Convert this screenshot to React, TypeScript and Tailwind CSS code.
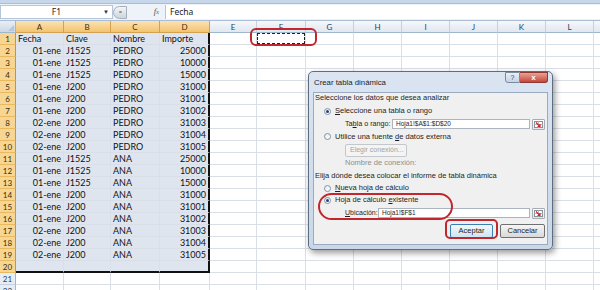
import React from 'react';

const cols = ['A', 'B', 'C', 'D', 'E', 'F', 'G', 'H', 'I', 'J', 'K', 'L', ''];

const rows: string[][] = [
    ['Fecha', 'Clave', 'Nombre', 'Importe'],
    ['01-ene', 'J1525', 'PEDRO', '25000'],
    ['01-ene', 'J1525', 'PEDRO', '10000'],
    ['01-ene', 'J1525', 'PEDRO', '15000'],
    ['01-ene', 'J200', 'PEDRO', '31000'],
    ['01-ene', 'J200', 'PEDRO', '31001'],
    ['01-ene', 'J200', 'PEDRO', '31002'],
    ['02-ene', 'J200', 'PEDRO', '31003'],
    ['02-ene', 'J200', 'PEDRO', '31004'],
    ['02-ene', 'J200', 'PEDRO', '31005'],
    ['01-ene', 'J1525', 'ANA', '25000'],
    ['01-ene', 'J1525', 'ANA', '10000'],
    ['01-ene', 'J1525', 'ANA', '15000'],
    ['01-ene', 'J200', 'ANA', '31000'],
    ['01-ene', 'J200', 'ANA', '31001'],
    ['01-ene', 'J200', 'ANA', '31002'],
    ['02-ene', 'J200', 'ANA', '31003'],
    ['02-ene', 'J200', 'ANA', '31004'],
    ['02-ene', 'J200', 'ANA', '31005'],
    ['', '', '', ''],
    ['', '', '', ''],
    ['', '', '', ''],
];

const Radio: React.FC<{ checked?: boolean }> = ({ checked }) => (
    <span className="w-[7px] h-[7px] rounded-full border border-[#8193a8] bg-gradient-to-br from-[#e6e9ee] to-white flex items-center justify-center shrink-0">
        {checked && <span className="w-[3px] h-[3px] rounded-full bg-[#26456e]" />}
    </span>
);

const RangeButton: React.FC = () => (
    <span className="w-[13px] h-[11px] border border-[#a6acb5] rounded-[1px] bg-gradient-to-b from-white to-[#e3e6ea] flex items-center justify-center shrink-0">
        <svg width="9" height="7" viewBox="0 0 9 7">
            <rect x="0.5" y="0.5" width="8" height="6" fill="#fff" stroke="#8a8f96" />
            <line x1="0.5" y1="3.5" x2="8.5" y2="3.5" stroke="#b8bcc2" />
            <line x1="4.5" y1="0.5" x2="4.5" y2="6.5" stroke="#b8bcc2" />
            <path d="M2 1.5 L6 5.5 M6 3 L6 5.5 L3.5 5.5" stroke="#d0262b" strokeWidth="1.2" fill="none" />
        </svg>
    </span>
);

const FormulaBar: React.FC = () => (
    <>
        <div className="h-[4px] bg-[#c6d7ec] border-b border-[#a9bdd6]" />
        <div className="h-[17px] flex items-center bg-[#eef3f9] border-b border-[#a9bdd6] text-[8.5px] text-[#1a1a1a]">
            <div className="w-[113px] h-[14px] bg-white border border-[#b6c6da] flex items-center relative">
                <span className="flex-1 text-center">F1</span>
                <span className="absolute right-[3px] text-[6px] text-[#333]">▼</span>
            </div>
            <div className="w-[14px] h-[13px] rounded-l-full border border-[#a5b0bd] bg-gradient-to-b from-[#f4f5f7] to-[#cfd5dc] flex items-center justify-center">
                <span className="w-[3px] h-[2px] rounded-full bg-[#8d97a3]" />
            </div>
            <div className="w-[38px] flex justify-end pr-[6px]">
                <span className="italic font-['Liberation_Serif',serif] text-[9px] text-[#555]">f<span className="text-[6px]">x</span></span>
            </div>
            <div className="flex-1 h-[14px] bg-white border-l border-[#b6c6da] flex items-center pl-[4px]">Fecha</div>
        </div>
    </>
);

const Sheet: React.FC = () => (
    <div className="grid grid-cols-[16px_48px_47px_49px_50px_47px_49px_48px_48px_48px_48px_48px_48px_48px] auto-rows-[12px] font-['Lato','Liberation_Sans',sans-serif] text-[9px] leading-[12px] text-[#111]">
        {/* header row */}
        <div className="bg-gradient-to-b from-[#e8eef6] to-[#cdd8e6] border-r border-b border-[#9eb6ce] flex items-end justify-end">
            <span className="w-0 h-0 border-l-[6px] border-l-transparent border-b-[6px] border-b-[#b8c6d6] mr-[1px] mb-[1px]" />
        </div>
        {cols.map((c, i) => (
            <div
                key={i}
                className={`text-center text-[8px] border-r border-b ${i < 4
                    ? 'bg-gradient-to-b from-[#fbe2b3] to-[#f3c46c] border-[#d3a14f] text-[#3a2d10]'
                    : 'bg-gradient-to-b from-[#f6f8fb] to-[#e0e7f0] border-[#c5d1df] border-b-[#9eb6ce] text-[#27415f]'
                    }`}
            >
                {c}
            </div>
        ))}

        {rows.map((r, ri) => {
            const rowNo = ri + 1;
            const inSel = rowNo <= 20;
            return (
                <React.Fragment key={rowNo}>
                    <div
                        className={`text-center text-[8px] border-r border-b ${inSel
                            ? 'bg-[#f7d592] border-[#e8b960] border-r-[#c9943c] text-[#3a2d10]'
                            : 'bg-[#e6edf6] border-[#c5d1df] border-r-[#9eb6ce] text-[#27415f]'
                            }`}
                    >
                        {rowNo}
                    </div>
                    {cols.map((c, ci) => {
                        const sel = inSel && ci < 4;
                        const val = ci < 4 ? r[ci] : '';
                        const right = rowNo > 1 && (ci === 0 || ci === 3);
                        const thickR = inSel && ci === 3;
                        const thickB = rowNo === 20 && ci < 4;
                        const isF1 = rowNo === 1 && c === 'F';
                        return (
                            <div
                                key={ci}
                                className={`relative overflow-hidden whitespace-nowrap px-[2px] ${sel ? 'bg-[#dfe5ef]' : 'bg-white'} ${right ? 'text-right' : 'text-left'} ${thickR ? 'border-r-2 border-r-[#111]' : 'border-r border-r-[#d9dee7]'} ${thickB ? 'border-b-2 border-b-[#111]' : 'border-b border-b-[#d9dee7]'}`}
                            >
                                {isF1 ? (
                                    <div className="absolute inset-0 border-[1.5px] border-dashed border-[#222]" />
                                ) : (
                                    val
                                )}
                            </div>
                        );
                    })}
                </React.Fragment>
            );
        })}
    </div>
);

const Dialog: React.FC = () => (
    <div className="absolute left-[308px] top-[71px] w-[245px] h-[179px] rounded-[5px] border border-[#5d6d82] bg-gradient-to-b from-[#dbe5f2] to-[#c9d7e8] shadow-[2px_3px_6px_rgba(0,0,0,0.4)] px-[4px] pb-[4px] flex flex-col font-['Liberation_Sans',sans-serif] text-[7.5px] text-[#1e1e1e] whitespace-nowrap">
        <div className="h-[20px] flex items-start">
            <span className="mt-[5px] pl-[1px] text-[7.8px]">Crear tabla dinámica</span>
            <div className="ml-auto flex">
                <span className="w-[15px] h-[11px] border border-[#7a8aa0] rounded-bl-[3px] bg-gradient-to-b from-[#e9eff7] to-[#c5d3e4] text-[7px] text-[#34465e] flex items-center justify-center leading-none">?</span>
                <span className="w-[28px] h-[11px] border border-[#8b3a35] border-l-0 rounded-br-[3px] bg-gradient-to-b from-[#e7a196] to-[#c6443a] text-[8px] text-white font-bold flex items-center justify-center leading-none">x</span>
            </div>
        </div>
        <div className="flex-1 bg-[#f0f0f0] border border-[#9aabc1] flex flex-col">
            <div className="h-[10px] flex items-center pl-[1px]">Seleccione los datos que desea analizar</div>
            <div className="h-[16px] flex items-center gap-[4px] pl-[10px]">
                <Radio checked />
                <span><u>S</u>eleccione una tabla o rango</span>
            </div>
            <div className="h-[10px] flex items-center pl-[31px]">
                <span className="w-[47px] text-[7.2px]">Ta<u>b</u>la o rango:</span>
                <span className="w-[138px] h-[10px] bg-white border border-[#acb4bf] flex items-center pl-[3px] text-[6.5px]">Hoja1!$A$1:$D$20</span>
                <span className="ml-[2px]"><RangeButton /></span>
            </div>
            <div className="h-[15px] flex items-center gap-[4px] pl-[10px]">
                <Radio />
                <span>Utilice una fuente <u>d</u>e datos externa</span>
            </div>
            <div className="h-[13px] flex items-center pl-[31px]">
                <span className="w-[62px] h-[13px] border border-[#c4c7cc] rounded-[2px] bg-[#f4f4f4] text-[#a3a3a3] text-[7px] flex items-center pl-[4px]">Elegir conexión...</span>
            </div>
            <div className="h-[12px] flex items-center pl-[31px] text-[#8e8e8e]">Nombre de conexión:</div>
            <div className="h-[14px] flex items-center pl-[1px]">Elija dónde desea colocar el informe de tabla dinámica</div>
            <div className="h-[10px] flex items-center gap-[4px] pl-[10px]">
                <Radio />
                <span><u>N</u>ueva hoja de cálculo</span>
            </div>
            <div className="h-[14px] flex items-center gap-[4px] pl-[10px]">
                <Radio checked />
                <span>Hoja de cálculo <u>e</u>xistente</span>
            </div>
            <div className="h-[12px] flex items-center pl-[31px]">
                <span className="w-[33px] text-[7px]"><u>U</u>bicación:</span>
                <span className="w-[152px] h-[10px] bg-white border border-[#acb4bf] flex items-center pl-[3px] text-[6.5px]">Hoja1!$F$1</span>
                <span className="ml-[2px]"><RangeButton /></span>
            </div>
            <div className="mt-[5px] h-[14px] flex justify-end gap-[7px] pr-[2px]">
                <span className="w-[43px] h-[14px] rounded-[2px] border border-[#3c7fb1] bg-gradient-to-b from-[#f2f8fc] to-[#cde4f4] flex items-center justify-center">Aceptar</span>
                <span className="w-[45px] h-[14px] rounded-[2px] border border-[#707070] bg-gradient-to-b from-[#f5f5f5] to-[#d9d9d9] flex items-center justify-center">Cancelar</span>
            </div>
        </div>
    </div>
);

export default function App() {
    return (
        <div className="relative w-[600px] h-[290px] overflow-hidden bg-white">
            <FormulaBar />
            <Sheet />
            <Dialog />

            {/* red annotation marks */}
            <div className="absolute left-[250px] top-[28px] w-[67px] h-[18px] border-2 border-[#c1272d] rounded-[6px]" />
            <div className="absolute left-[318px] top-[193px] w-[135px] h-[27px] border-2 border-[#c1272d] rounded-[14px]" />
            <div className="absolute left-[445px] top-[219px] w-[53px] h-[20px] border-2 border-[#c1272d] rounded-[5px]" />
        </div>
    );
}
